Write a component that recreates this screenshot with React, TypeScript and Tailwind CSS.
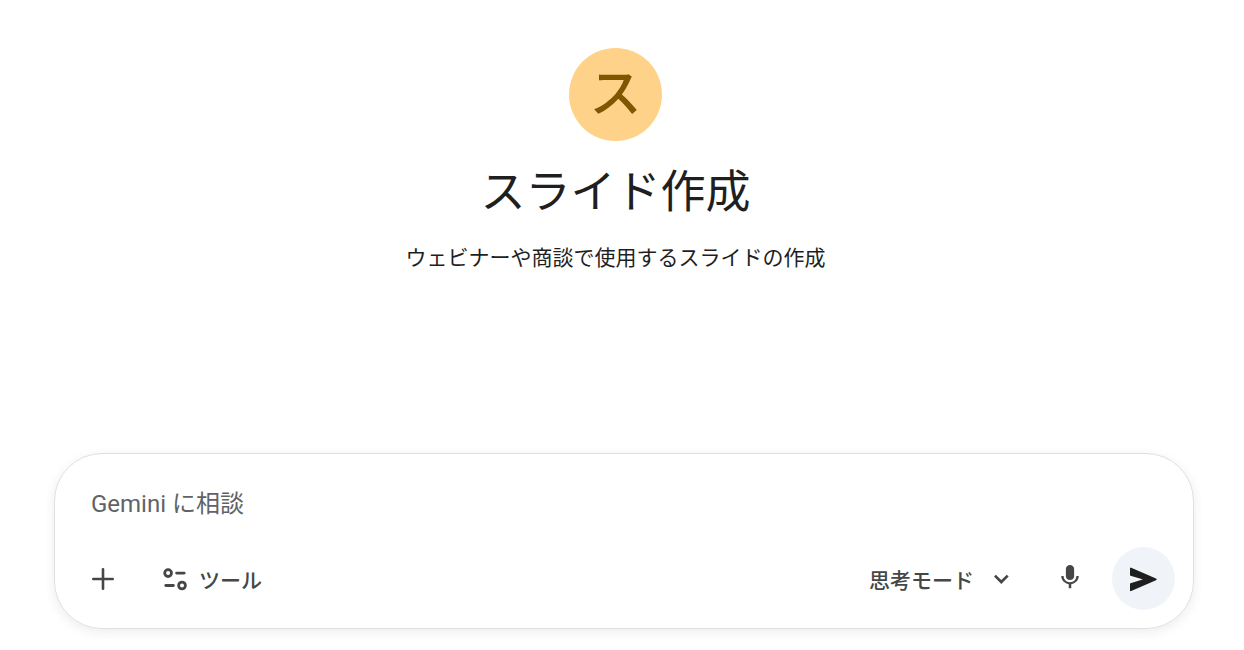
import React, { useState } from "react";

function PlusIcon() {
  return (
    <svg width="24" height="24" viewBox="0 0 24 24" fill="none" stroke="currentColor" strokeWidth="2.6" strokeLinecap="round">
      <path d="M12 2.3v19.4M2.3 12h19.4" />
    </svg>
  );
}

function ToolsIcon() {
  return (
    <svg width="24" height="24" viewBox="0 0 24 24" fill="none" stroke="currentColor" strokeWidth="2.8" strokeLinecap="round">
      <circle cx="5.1" cy="6.1" r="3.4" />
      <path d="M13.6 6.1h7.6" />
      <circle cx="19" cy="18.5" r="3.4" />
      <path d="M2.8 18.5h7.6" />
    </svg>
  );
}

function ChevronIcon() {
  return (
    <svg width="16" height="16" viewBox="0 0 16 16" fill="none" stroke="currentColor" strokeWidth="2.7">
      <path d="M.9 4.6 7.3 11l6.4-6.4" />
    </svg>
  );
}

function MicIcon() {
  return (
    <svg width="30" height="30" viewBox="0 1 24 24" fill="currentColor">
      <path d="M12 13.8c1.82 0 3.3-1.38 3.3-3.1V4.9c0-1.72-1.48-3.1-3.3-3.1S8.7 3.18 8.7 4.9v5.8c0 1.72 1.48 3.1 3.3 3.1zm5.1-3.2c0 2.9-2.3 4.9-5.1 4.9s-5.1-2-5.1-4.9H5c0 3.4 2.7 5.9 6 6.5v3.3h2v-3.3c3.3-.6 6-3.1 6-6.5h-1.9z" />
    </svg>
  );
}

function SendIcon() {
  return (
    <svg width="28" height="26" viewBox="0 0 28 26" fill="currentColor" stroke="currentColor" strokeWidth="2" strokeLinejoin="round">
      <path d="M.8 2.6 25.6 13.4.8 24.2v-6.1L16 13.4.8 8.7z" />
    </svg>
  );
}

export default function App() {
  const [prompt, setPrompt] = useState("");

  return (
    <main className="bg-white pb-5 text-[#1f1f1f] font-['Noto_Sans_CJK_JP',sans-serif]">
      {/* Gem header */}
      <header className="flex min-h-[453px] flex-col items-center pt-12 pr-[13px] text-center">
        <div className="flex size-[93px] items-center justify-center rounded-full bg-[#ffd28a] pb-2.5 text-[52px] leading-none font-medium text-[#805600]">
          ス
        </div>
        <h1 className="mt-5 text-[45px] leading-[56px]">スライド作成</h1>
        <p className="mt-6 text-[21px] leading-[30px]">ウェビナーや商談で使用するスライドの作成</p>
      </header>

      {/* Prompt box */}
      <form
        className="mr-[50px] ml-[54px] rounded-[48px] border border-[#dddfe1] pt-8 pr-[18px] pb-[18px] pl-6 shadow-[0_3px_12px_rgba(0,0,0,0.08)]"
        onSubmit={(e) => e.preventDefault()}
      >
        <input
          type="text"
          aria-label="Gemini に相談"
          placeholder="Gemini に相談"
          value={prompt}
          onChange={(e) => setPrompt(e.target.value)}
          className="block h-9 w-full px-3 font-[Roboto,'Noto_Sans_CJK_JP',sans-serif] text-2xl outline-none placeholder:text-[#5f6368]"
        />

        <div className="mt-[25px] flex items-center justify-between text-[21px] leading-8 font-medium text-[#444746]">
          <div className="flex items-center gap-9">
            <button type="button" aria-label="追加" className="flex size-12 items-center justify-center">
              <PlusIcon />
            </button>
            <button type="button" className="flex items-center gap-3">
              <ToolsIcon />
              ツール
            </button>
          </div>

          <div className="flex items-center">
            <button type="button" className="flex items-center gap-5">
              思考モード
              <ChevronIcon />
            </button>
            <button type="button" aria-label="マイク" className="ml-9 flex size-12 items-center justify-center">
              <MicIcon />
            </button>
            <button
              type="submit"
              aria-label="送信"
              className="ml-[18px] flex size-[63px] items-center justify-center rounded-full bg-[#f0f4f9] text-[#1f1f1f]"
            >
              <SendIcon />
            </button>
          </div>
        </div>
      </form>
    </main>
  );
}
